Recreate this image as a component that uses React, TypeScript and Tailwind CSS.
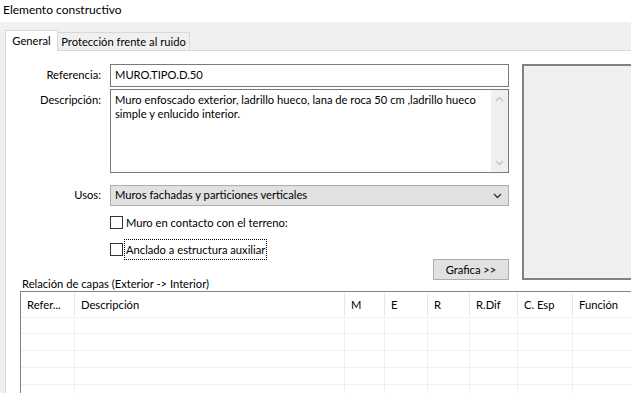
import React from 'react';

const font = { fontFamily: 'Lato, "Noto Sans", sans-serif' };

const columns = [
  { label: 'Refer...', w: 'w-[53px]' },
  { label: 'Descripción', w: 'w-[270px]' },
  { label: 'M', w: 'w-[40px]' },
  { label: 'E', w: 'w-[43px]' },
  { label: 'R', w: 'w-[42px]' },
  { label: 'R.Dif', w: 'w-[48px]' },
  { label: 'C. Esp', w: 'w-[55px]' },
  { label: 'Función', w: 'w-[90px]' },
];

function Chevron({ up, color = '#c4c4c4' }: { up?: boolean; color?: string }) {
  return (
    <svg width="9" height="6" viewBox="0 0 9 6">
      <path d={up ? 'M1 5 L4.5 1.5 L8 5' : 'M1 1 L4.5 4.5 L8 1'} fill="none" stroke={color} strokeWidth="1.3" />
    </svg>
  );
}

function Checkbox({ label, focused }: { label: string; focused?: boolean }) {
  return (
    <div className="flex items-center h-[13px]">
      <div className="w-[13px] h-[13px] border border-[#333333] bg-white shrink-0" />
      <span className={`ml-[2px] px-[1px] leading-[19px] whitespace-nowrap ${focused ? 'outline outline-1 outline-dotted outline-black' : ''}`}>{label}</span>
    </div>
  );
}

export default function App() {
  return (
    <div className="w-[631px] h-[393px] overflow-hidden bg-[#f0f0f0] text-[11.2px] text-black flex flex-col" style={font}>
      {/* Title */}
      <div className="h-[22px] bg-white pl-[3px] leading-[20px] text-[12px] shrink-0">Elemento constructivo</div>

      {/* Tabs */}
      <div className="h-[28px] pl-[5px] flex items-end shrink-0 relative">
        <div className="h-[21px] w-[53px] bg-white border border-b-0 border-[#d9d9d9] flex items-center justify-center relative top-[1px] z-10 leading-none whitespace-nowrap">
          General
        </div>
        <div className="h-[18px] w-[132px] border border-l-0 border-b-0 border-[#d9d9d9] flex items-center justify-center leading-none whitespace-nowrap">
          Protección frente al ruido
        </div>
      </div>

      {/* Panel */}
      <div className="flex-1 ml-[5px] bg-white border-l border-t border-[#d9d9d9] flex flex-col">
        <div className="flex pt-[13px]">
          <div className="w-[503px] flex flex-col">
            <div className="flex items-center h-[23px]">
              <div className="w-[96px] text-right pr-[1px]">Referencia:</div>
              <div className="ml-[8px] flex-1 h-[23px] border border-[#7a7a7a] pl-[4px] leading-[19px]">MURO.TIPO.D.50</div>
            </div>
            <div className="flex mt-[2px]">
              <div className="w-[96px] text-right pr-[1px] pt-[3px]">Descripción:</div>
              <div className="ml-[8px] flex-1 h-[84px] border border-[#7a7a7a] flex">
                <div className="flex-1 pl-[4px] pt-[3px] pr-[4px] leading-[14px]">
                  Muro enfoscado exterior, ladrillo hueco, lana de roca 50 cm ,ladrillo hueco simple y enlucido interior.
                </div>
                <div className="w-[17px] bg-[#f0f0f0] flex flex-col items-center justify-between py-[6px]">
                  <Chevron up />
                  <Chevron />
                </div>
              </div>
            </div>
            <div className="flex items-center mt-[12px]">
              <div className="w-[96px] text-right pr-[1px]">Usos:</div>
              <div className="ml-[8px] flex-1 h-[21px] bg-[#e1e1e1] border border-[#adadad] flex items-center justify-between pl-[4px] pr-[6px]">
                <span>Muros fachadas y particiones verticales</span>
                <Chevron color="#333333" />
              </div>
            </div>
            <div className="ml-[104px] mt-[10px] flex flex-col gap-[14px]">
              <Checkbox label="Muro en contacto con el terreno:" />
              <Checkbox label="Anclado a estructura auxiliar" focused />
            </div>
            <div className="flex justify-end mt-[3px]">
              <div className="w-[76px] h-[21px] bg-[#e1e1e1] border border-[#adadad] flex items-center justify-center leading-none">
                Grafica &gt;&gt;
              </div>
            </div>
          </div>
          <div className="ml-[13px] flex-1 h-[216px] bg-[#f0f0f0] border-2 border-r-0 border-[#828282]" />
        </div>

        <div className="-mt-[4px] ml-[16px] h-[15px] leading-[15px]">Relación de capas (Exterior -&gt; Interior)</div>

        {/* Table */}
        <div className="ml-[14px] flex-1 border border-r-0 border-[#828282] bg-white flex flex-col w-[700px]">
          <div className="flex h-[25px]">
            {columns.map((c, i) => (
              <div key={c.label} className={`${c.w} shrink-0 flex items-center pl-[6px] pt-[2px] ${i > 0 ? 'border-l border-[#e5e5e5]' : ''} my-[1px]`}>
                {c.label}
              </div>
            ))}
          </div>
          {[16, 17, 17, 17, 17].map((h, r) => (
            <div key={r} className="flex border-t border-[#f0f0f0]" style={{ height: h }}>
              {columns.map((c, i) => (
                <div key={c.label} className={`${c.w} shrink-0 ${i > 0 ? 'border-l border-[#f0f0f0]' : ''}`} />
              ))}
            </div>
          ))}
        </div>
      </div>
    </div>
  );
}
